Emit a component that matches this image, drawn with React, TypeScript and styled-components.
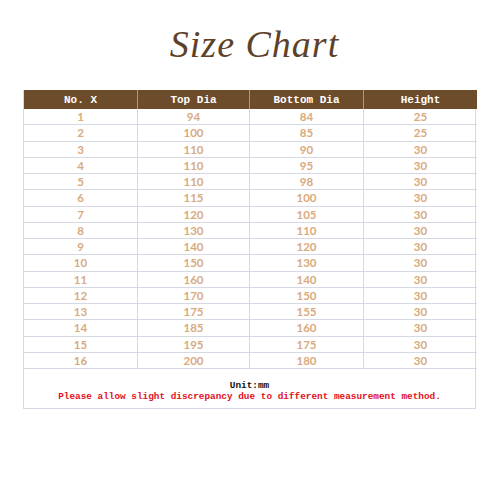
import React from 'react';
import styled, { createGlobalStyle } from 'styled-components';

const GlobalStyle = createGlobalStyle`
  html, body {
    margin: 0;
    padding: 0;
    background: #ffffff;
  }
`;

const Page = styled.div`
  width: 500px;
  height: 500px;
  box-sizing: border-box;
  padding: 22px 24px 0 23px;
  background: white;
`;

const Title = styled.div`
  text-align: center;
  font-family: "Liberation Serif", serif;
  font-style: italic;
  font-size: 38px;
  line-height: 44px;
  color: #5e4128;
  margin-left: 10px;
  letter-spacing: 1px;
  height: 68px;
`;

const Table = styled.div`
  display: grid;
  grid-template-columns: 114px 112px 114px 113px;
  border-left: 1px solid #d6d9e3;
  border-right: 1px solid #d6d9e3;
`;

const HeadCell = styled.div<{ $last?: boolean }>`
  height: 19px;
  background: #6d4c2c;
  color: #ffffff;
  font-family: "Liberation Mono", monospace;
  font-weight: bold;
  font-size: 11px;
  display: flex;
  align-items: center;
  justify-content: center;
  box-sizing: border-box;
  border-right: ${p => (p.$last ? 'none' : '1px solid #b8966e')};
`;

const Cell = styled.div<{ $last?: boolean }>`
  height: 16.25px;
  box-sizing: border-box;
  border-bottom: 1px solid #d6d9e3;
  border-right: ${p => (p.$last ? 'none' : '1px solid #d6d9e3')};
  color: #d8aa80;
  font-family: "Lato", "Open Sans", sans-serif;
  font-weight: 700;
  font-size: 11.5px;
  display: flex;
  align-items: center;
  justify-content: center;
`;

const Footer = styled.div`
  height: 40px;
  box-sizing: border-box;
  border: 1px solid #d6d9e3;
  border-top: none;
  display: flex;
  flex-direction: column;
  align-items: center;
  justify-content: center;
  padding-top: 4px;
  font-family: "Liberation Mono", monospace;
  font-weight: bold;
  font-size: 9.4px;
  line-height: 11px;
`;

const Unit = styled.div`
  color: #111111;
`;

const Note = styled.div`
  color: #e3101c;
`;

const rows = [
  [1, 94, 84, 25],
  [2, 100, 85, 25],
  [3, 110, 90, 30],
  [4, 110, 95, 30],
  [5, 110, 98, 30],
  [6, 115, 100, 30],
  [7, 120, 105, 30],
  [8, 130, 110, 30],
  [9, 140, 120, 30],
  [10, 150, 130, 30],
  [11, 160, 140, 30],
  [12, 170, 150, 30],
  [13, 175, 155, 30],
  [14, 185, 160, 30],
  [15, 195, 175, 30],
  [16, 200, 180, 30],
];

const headers = ['No. X', 'Top Dia', 'Bottom Dia', 'Height'];

const App = () => {
  return (
    <Page>
      <GlobalStyle />
      <Title>Size Chart</Title>
      <Table>
        {headers.map((h, i) => (
          <HeadCell key={h} $last={i === 3}>{h}</HeadCell>
        ))}
        {rows.map(r =>
          r.map((v, i) => (
            <Cell key={`${r[0]}-${i}`} $last={i === 3}>{v}</Cell>
          ))
        )}
      </Table>
      <Footer>
        <Unit>Unit:mm</Unit>
        <Note>Please allow slight discrepancy due to different measurement method.</Note>
      </Footer>
    </Page>
  );
};

export default App;
